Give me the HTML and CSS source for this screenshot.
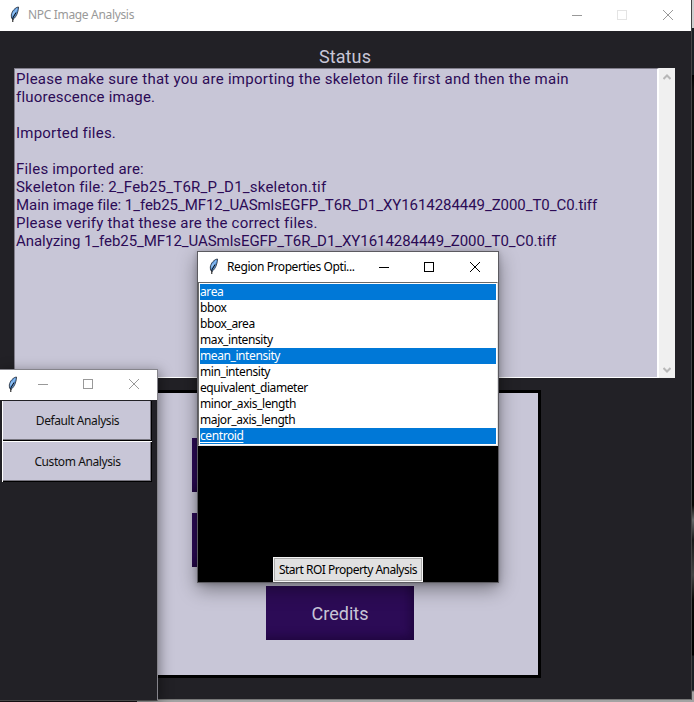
FILE: index.html
```html
<!DOCTYPE html>
<html lang="en">
<head>
<meta charset="utf-8">
<title>NPC Image Analysis</title>
<link rel="stylesheet" href="styles.css">
</head>
<body>
<svg width="0" height="0" class="defs">
  <symbol id="feather" viewBox="0 0 12 17">
    <path d="M9.500 1 C6 1.500 3 5 2.300 9 L2.500 12 L4 13.500 C6 12 8 9 8.700 6 C9.300 4 9.500 3 9.500 1Z" fill="#5c98dc" stroke="#222a35" stroke-width=".8"/>
    <path d="M8 2.500 L4.500 8.500 M5 5.500 L3.500 9.500" stroke="#8fc0f2" stroke-width="1.200"/>
    <path d="M7 6.500 L3.800 12 V16" stroke="#080808" stroke-width="1" fill="none"/>
  </symbol>
</svg>
<div class="desktop">
  <section class="window main">
    <header class="titlebar">
      <svg class="feather"><use href="#feather"/></svg>
      <span class="title">NPC Image Analysis</span>
      <svg class="controls" viewBox="0 0 104 12" shape-rendering="crispEdges"><path d="M0 6.500h10"/><rect class="faint" x="45.500" y="1.500" width="9" height="9"/><path shape-rendering="auto" d="M91 1l10 10M101 1l-10 10"/></svg>
    </header>
    <h1>Status</h1>
    <div class="status">
      <div class="log">
        <p class="wide">Please make sure that you are importing the skeleton file first and then the main</p>
        <p>fluorescence image.</p>
        <p>&nbsp;</p>
        <p>Imported files.</p>
        <p>&nbsp;</p>
        <p>Files imported are:</p>
        <p>Skeleton file: 2_Feb25_T6R_P_D1_skeleton.tif</p>
        <p class="tight">Main image file: 1_feb25_MF12_UASmlsEGFP_T6R_D1_XY1614284449_Z000_T0_C0.tiff</p>
        <p>Please verify that these are the correct files.</p>
        <p class="tight">Analyzing 1_feb25_MF12_UASmlsEGFP_T6R_D1_XY1614284449_Z000_T0_C0.tiff</p>
      </div>
      <div class="scrollbar">
        <svg viewBox="0 0 8 6"><path d="M.5 5L4 1.500 7.500 5"/></svg>
        <svg viewBox="0 0 8 6"><path d="M.5 1L4 4.500 7.500 1"/></svg>
      </div>
    </div>
    <div class="panel">
      <div class="tile"></div><div class="tile"></div>
      <div class="tile"></div><div class="tile"></div>
      <div class="tile credits"><span>Credits</span></div>
    </div>
  </section>

  <section class="window chooser">
    <header class="titlebar">
      <svg class="feather"><use href="#feather"/></svg>
      <svg class="controls" viewBox="0 0 104 12" shape-rendering="crispEdges"><path d="M0 6.500h10"/><rect x="45.500" y="1.500" width="9" height="9"/><path shape-rendering="auto" d="M91 1l10 10M101 1l-10 10"/></svg>
    </header>
    <div class="choices">
      <div class="choice"><span>Default Analysis</span></div>
      <div class="choice"><span>Custom Analysis</span></div>
    </div>
  </section>

  <section class="window dialog">
    <header class="titlebar">
      <svg class="feather"><use href="#feather"/></svg>
      <span class="title">Region Properties Opti...</span>
      <svg class="controls" viewBox="0 0 104 12" shape-rendering="crispEdges"><path d="M0 6.500h10"/><rect x="45.500" y="1.500" width="9" height="9"/><path shape-rendering="auto" d="M91 1l10 10M101 1l-10 10"/></svg>
    </header>
    <ul class="list">
      <li class="on"><span>area</span></li>
      <li><span>bbox</span></li>
      <li><span>bbox_area</span></li>
      <li><span>max_intensity</span></li>
      <li class="on"><span>mean_intensity</span></li>
      <li><span>min_intensity</span></li>
      <li><span>equivalent_diameter</span></li>
      <li><span>minor_axis_length</span></li>
      <li><span>major_axis_length</span></li>
      <li class="on focus"><span>centroid</span></li>
    </ul>
    <div class="start"><span>Start ROI Property Analysis</span></div>
  </section>
</div>
</body>
</html>
```
FILE: styles.css
```css
* { box-sizing: border-box; margin: 0; padding: 0; }
body { width: 694px; height: 702px; overflow: hidden; font: 12px/16px "Noto Sans", sans-serif; letter-spacing: -.41px; }
.defs { position: absolute; }
.desktop { position: relative; width: 694px; height: 702px; overflow: hidden;
  background:
    linear-gradient(90deg, #1b1418 137px, #a3a3a3 137px) 0 700px / 100% 2px no-repeat,
    linear-gradient(#d0d0d0 28px, #1b2024 28px, #1b2024 75px, #000 75px, #101010 90px, #080705 280px, #080705 505px, #66696a 520px, #181818 540px, #444 575px, #080705 600px, #000 655px, #1b2024 656px, #1b2024 690px, #a3a3a3 692px); }
.window { position: absolute; }
.titlebar { display: flex; align-items: center; background: #fff; color: #999; white-space: nowrap; }
.feather { width: 12px; height: 17px; flex: none; }
.controls { width: 104px; height: 12px; margin-left: auto; flex: none; fill: none; stroke: #999; }
.controls .faint { stroke: #e4e4e4; }

.main { left: 0; top: 0; width: 692px; height: 700px; background: #222126; border-right: 1px solid #444; border-bottom: 1px solid #777; }
.main .titlebar { height: 31px; padding: 0 15px 2px 9px; }
.main .title { margin-left: 7px; letter-spacing: -.33px; }
h1 { width: 690px; margin-top: 15px; height: 22px; font: 18px/22px Roboto, sans-serif; letter-spacing: .1px; color: #c8c6d7; text-align: center; }
.status { display: flex; width: 661px; height: 310px; margin-left: 14px; }
.log { width: 645px; padding: 1px 1px; background: #c8c6d7; border: 1px solid #817e8b; border-right: 2px solid #fff; border-bottom-color: #fff; color: #2c0b56; font: 15px/18px Roboto, sans-serif; letter-spacing: .21px; white-space: nowrap; }
.log .wide { letter-spacing: .265px; }
.log .tight { letter-spacing: -.055px; }
.scrollbar { width: 16px; background: #f0f0f0; display: flex; flex-direction: column; justify-content: space-between; align-items: center; padding: 6px 0 5px; }
.scrollbar svg { width: 8px; height: 6px; fill: none; stroke: #b8b8b8; stroke-width: 2; }
.panel { display: grid; grid-template-columns: 148px 148px; grid-template-rows: 75px 73px 54px; justify-content: center; width: 402px; height: 288px; margin: 12px 0 0 139px; padding-top: 45px; background: #c8c6d7; border: 3px solid #000; }
.tile { height: 54px; background: #2c0b56; box-shadow: inset -8px -8px 8px -4px #200640; }
.credits { grid-column: 1 / 3; width: 148px; justify-self: center; color: #c8c6d7; font: 18px/56px Roboto, sans-serif; letter-spacing: 0; text-align: center; }

.chooser { left: -1px; top: 369px; width: 159px; height: 332px; background: #222126; border: 1px solid #85848b; border-bottom-color: #484848; box-shadow: 2px 2px 12px rgba(0,0,0,.4); }
.chooser .titlebar { height: 30px; padding: 0 15px 2px 7px; }
.choices { padding: 1px 5px 0 2px; }
.choice { height: 41px; border: 1px solid #fff; border-right: 0; border-bottom: 0; background: #c8c6d7; box-shadow: inset -1px -1px #000, inset -2px -2px #77757f; color: #111; text-align: center; line-height: 39px; }
.choice:first-child { height: 40px; border-top: 0; line-height: 40px; }

.dialog { left: 197px; top: 251px; width: 302px; height: 332px; background: #000; border: 1px solid #5b5a60; box-shadow: 0 6px 18px rgba(0,0,0,.4), 0 1px 5px rgba(0,0,0,.2); display: flex; flex-direction: column; }
.dialog .titlebar { height: 30px; padding: 0 15px 1px 10px; color: #000; }
.dialog .title { margin-left: 7px; }
.dialog .controls { stroke: #000; }
.list { list-style: none; width: 300px; height: 164px; background: #fff; border: 1px solid #696969; border-right-color: #e3e3e3; border-bottom-color: #e3e3e3; padding: 1px; color: #000; }
.list li { height: 16px; line-height: 16px; }
.list .on { background: #0078d7; color: #fff; }
.focus span { text-decoration: underline; text-underline-offset: 2px; }
.start { width: 150px; height: 25px; margin: auto auto 0 75px; background: #e1e1e1; border: 1px solid #f5f5f5; box-shadow: inset 0 0 0 1px #adadad; color: #000; text-align: center; line-height: 24px; letter-spacing: -.5px; white-space: nowrap; }
```
